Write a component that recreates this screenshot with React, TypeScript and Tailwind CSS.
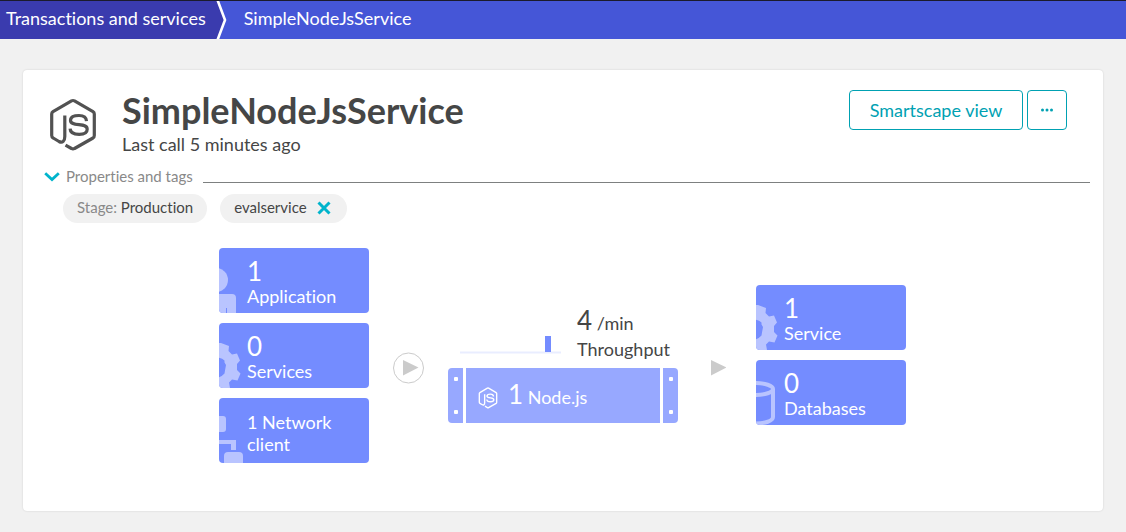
import type { ReactNode } from "react";

function NodeLogo({ className, stroke }: { className: string; stroke: number }) {
  return (
    <svg
      viewBox="0 0 48 54"
      className={className}
      fill="none"
      stroke="currentColor"
      strokeWidth={stroke}
      strokeLinejoin="round"
      aria-hidden="true"
    >
      <path d="M15.800 17.500V38.500C15.800 43 13.500 45.500 10 43.500L4.200 40Q2.700 39.200 2.700 37.500V16Q2.700 14.500 4 13.700L22.500 2.900Q24 2.100 25.500 2.900L44 13.700Q45.300 14.500 45.300 16V37.500Q45.300 39.200 44 40L25.500 50.500Q24 51.400 22.500 50.500L16.500 47.200" />
      <path d="M37.500 23.200C37.300 19.200 34.500 17.500 30 17.500C24.500 17.500 21.500 19 21.500 22.500C21.500 25.600 25 26.100 30 26.700C35.500 27.300 38.200 28.100 38.200 31.200C38.200 34.700 35 36.300 30.200 36.300C24.500 36.300 21.200 34.400 21.100 30.600" />
    </svg>
  );
}

function UserShape() {
  return (
    <svg viewBox="0 0 24 45" className="absolute bottom-0 left-0 h-[45px] w-6" fill="#b9c4ff" aria-hidden="true">
      <circle cx="-3" cy="12" r="12" />
      <path d="M-2 26H13Q17 26 17 30V45H8V40H7V45H-2Z" />
    </svg>
  );
}

function GearShape() {
  return (
    <svg viewBox="0 0 24 45" className="absolute bottom-0 left-0 h-[45px] w-6" fill="#b9c4ff" aria-hidden="true">
      <path
        fillRule="evenodd"
        d="M-2 0H2L10 3L9.500 8L13 11.500L18 10.500L21 17.500L18 21V27L21.500 30.500L18.500 37.500L13 36.500L10 39.500L11 45H-2V34.500Q2 34.500 5.500 30.500L6 27.500L7 22L5.500 19.500V17.500Q3 15 -2 14.500Z"
      />
    </svg>
  );
}

function NetworkShape() {
  return (
    <svg viewBox="0 0 24 48" className="absolute bottom-0 left-0 h-12 w-6" fill="#b9c4ff" aria-hidden="true">
      <rect x="-8" y="1" width="15" height="16" rx="3" />
      <path d="M-1 25H17V35H12V29H-1Z" />
      <path d="M5 48V41Q5 37 9 37H20Q24 37 24 41V48Z" />
    </svg>
  );
}

function DatabaseShape() {
  return (
    <svg viewBox="0 0 24 45" className="absolute bottom-0 left-0 h-[45px] w-6" fill="none" stroke="#b9c4ff" strokeWidth="4" aria-hidden="true">
      <ellipse cx="-1" cy="9" rx="18" ry="6" />
      <path d="M17 9V37C17 41 9 43.500 -1 43.500" />
    </svg>
  );
}

function Count({ children }: { children: ReactNode }) {
  return <span className="text-[26px] leading-7">{children}</span>;
}

function Tile({ count, label, icon }: { count: string; label: string; icon: ReactNode }) {
  return (
    <a
      href="#"
      className="relative flex h-[65px] w-[150px] flex-col justify-center overflow-hidden rounded bg-[#748cff] pt-0.5 pl-7 text-lg leading-[22px] text-white"
    >
      {icon}
      <Count>{count}</Count>
      <span>{label}</span>
    </a>
  );
}

function Rail() {
  return (
    <span className="flex w-[15px] flex-col items-center justify-between bg-[#97a8ff] py-[9px]">
      <span className="size-1 rounded-[1px] bg-white" />
      <span className="size-1 rounded-[1px] bg-white" />
    </span>
  );
}

export default function App() {
  return (
    <div className="min-h-screen bg-[#f1f1f1] font-['Lato','Noto_Sans',sans-serif] text-[#454646] [font-variant-ligatures:none]">
      <nav aria-label="Breadcrumb" className="flex h-[39px] items-stretch border-t border-[#1b1b2d] bg-[#4556d7] text-lg text-white">
        <a href="#" className="flex items-center bg-[#3a3bae] pr-2.5 pb-1 pl-1.5 leading-6">
          Transactions and services
        </a>
        <svg viewBox="0 0 12 38" className="h-[38px] w-3" aria-hidden="true">
          <path d="M0 0H1L9 19L1 38H0Z" fill="#3a3bae" />
          <path d="M1.500 -1L9 19L1.500 39" fill="none" stroke="#fff" strokeWidth="2.600" />
        </svg>
        <a href="#" className="flex items-center pb-1 pl-4 leading-6">
          SimpleNodeJsService
        </a>
      </nav>

      <main className="px-[23px] pt-[31px] pb-5">
        <section className="rounded bg-white pb-12 shadow-[0_0_2px_rgba(0,0,0,0.15)]">
          <header className="flex items-start pt-5 pr-9 pl-[26px]">
            <NodeLogo className="mt-2 h-[54px] w-12 text-[#525252]" stroke={3.2} />
            <div className="ml-[25px] flex-1">
              <h1 className="text-4xl leading-10 font-bold">SimpleNodeJsService</h1>
              <p className="text-lg leading-7">Last call 5 minutes ago</p>
            </div>
            <div className="flex gap-1 text-[#00a1b2]">
              <button type="button" className="h-10 w-[174px] rounded border border-current text-lg">
                Smartscape view
              </button>
              <button type="button" aria-label="More actions" className="flex size-10 items-center justify-center rounded border border-current">
                <svg viewBox="0 0 14 4" className="h-1 w-3.5" fill="currentColor" aria-hidden="true">
                  <circle cx="2.500" cy="2" r="1.500" />
                  <circle cx="7" cy="2" r="1.500" />
                  <circle cx="11.500" cy="2" r="1.500" />
                </svg>
              </button>
            </div>
          </header>

          <div className="mt-2 flex pr-[13px] pl-[21px]">
            <button type="button" aria-expanded="true" className="flex items-center gap-1.5 text-[15px] leading-5 text-[#898989]">
              <svg viewBox="0 0 16 10" className="mt-0.5 h-2.5 w-4 text-[#00b4cc]" fill="none" stroke="currentColor" strokeWidth="2.800" aria-hidden="true">
                <path d="M1.200 1.200L8 7.500L14.800 1.200" />
              </svg>
              Properties and tags
            </button>
            <span className="mb-[3px] ml-2.5 flex-1 border-b border-[#7d8080]" />
          </div>

          <ul className="mt-2 flex gap-[13px] pl-10 text-[15px] leading-[27px]">
            <li className="h-[29px] rounded-full bg-[#f1f1f1] px-3.5">
              <span className="text-[#898989]">Stage:</span> Production
            </li>
            <li className="flex h-[29px] items-start rounded-full bg-[#f1f1f1] pr-4 pl-3.5">
              evalservice
              <button type="button" aria-label="Remove tag evalservice" className="ml-2.5 flex h-[27px] items-center">
                <svg viewBox="0 0 14 14" className="size-3.5 text-[#00b4cc]" fill="none" stroke="currentColor" strokeWidth="3" aria-hidden="true">
                  <path d="M1.500 1.500L12.500 12.500M12.500 1.500L1.500 12.500" />
                </svg>
              </button>
            </li>
          </ul>

          <div className="mt-[25px] flex items-center justify-center pr-px">
            <div className="flex flex-col gap-2.5">
              <Tile count="1" label="Application" icon={<UserShape />} />
              <Tile count="0" label="Services" icon={<GearShape />} />
              <a
                href="#"
                className="relative flex h-[65px] w-[150px] items-center overflow-hidden rounded bg-[#748cff] pt-1 pr-8 pl-7 text-lg leading-[22px] text-white"
              >
                <NetworkShape />
                1 Network client
              </a>
            </div>

            <svg viewBox="0 0 32 32" className="mt-6 mr-[23px] ml-6 size-8" aria-hidden="true">
              <circle cx="15.500" cy="16" r="15" fill="none" stroke="#cbcbcb" />
              <path d="M10 8L25.500 15.500L10 23.500Z" fill="#cbcbcb" />
            </svg>

            <div className="flex w-[230px] flex-col pt-[18px]">
              <div className="flex items-end justify-between pr-2 pb-1.5 pl-3">
                <svg viewBox="0 0 102 18" className="mb-2 h-[18px] w-[102px]" role="img" aria-label="Throughput over time">
                  <path d="M0 16.500H101" stroke="#e9edff" strokeWidth="2" />
                  <rect x="85" y="0" width="6" height="16" fill="#748cff" />
                </svg>
                <p className="text-lg leading-[26px]">
                  <Count>4</Count> /min
                  <br />
                  Throughput
                </p>
              </div>
              <a href="#" className="flex h-[55px] gap-[3px] overflow-hidden rounded text-white">
                <Rail />
                <span className="flex flex-1 items-center bg-[#97a8ff] pl-3">
                  <NodeLogo className="mt-1 mr-2.5 h-[22px] w-5" stroke={3.4} />
                  <span className="text-lg">
                    <Count>1</Count> Node.js
                  </span>
                </span>
                <Rail />
              </a>
            </div>

            <svg viewBox="0 0 16 16" className="mt-6 mr-[30px] ml-8 size-4" aria-hidden="true">
              <path d="M1 0L16.500 7.500L1 15.500Z" fill="#cbcbcb" />
            </svg>

            <div className="flex flex-col gap-2.5 pb-px">
              <Tile count="1" label="Service" icon={<GearShape />} />
              <Tile count="0" label="Databases" icon={<DatabaseShape />} />
            </div>
          </div>
        </section>
      </main>
    </div>
  );
}
